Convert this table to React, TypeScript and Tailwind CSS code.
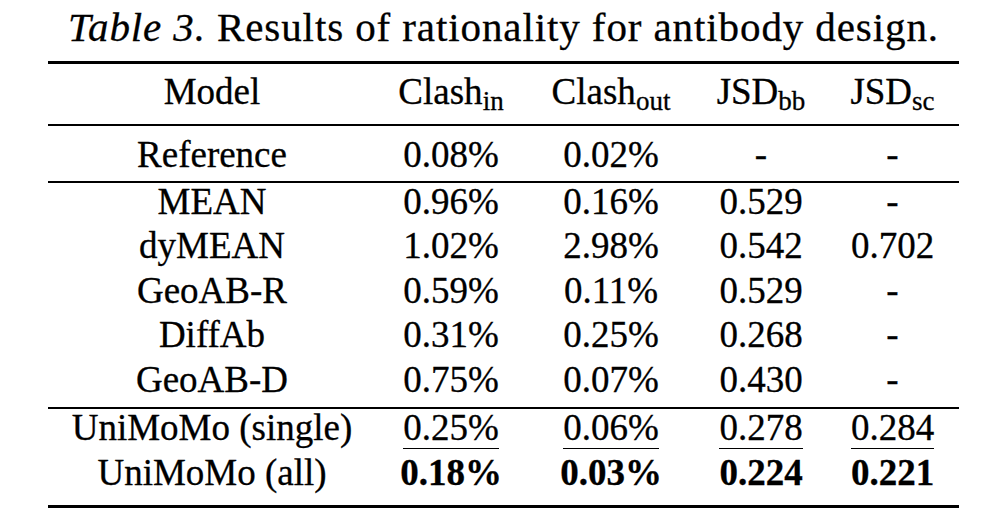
import React from "react";

type Cell = { v: string; u?: boolean; b?: boolean };

const cols = "grid grid-cols-[328px_150px_170px_130px_133px] text-center";

function Row({ name, cells, h = "" }: { name: string; cells: Cell[]; h?: string }) {
  return (
    <div className={`${cols} ${h} leading-[34px]`}>
      <div>{name}</div>
      {cells.map((c, i) => (
        <div key={i}>
          {c.u ? (
            <span className="inline-block border-b-[1.5px] border-black pb-[3px] leading-[34px]">{c.v}</span>
          ) : (
            <span className={c.b ? "font-bold" : ""}>{c.v}</span>
          )}
        </div>
      ))}
    </div>
  );
}

function Sub({ children }: { children: React.ReactNode }) {
  return <span className="text-[27px] leading-[0px] align-[-6px]">{children}</span>;
}

const mid: [string, string[]][] = [
  ["MEAN", ["0.96%", "0.16%", "0.529", "-"]],
  ["dyMEAN", ["1.02%", "2.98%", "0.542", "0.702"]],
  ["GeoAB-R", ["0.59%", "0.11%", "0.529", "-"]],
  ["DiffAb", ["0.31%", "0.25%", "0.268", "-"]],
  ["GeoAB-D", ["0.75%", "0.07%", "0.430", "-"]],
];

export default function App() {
  return (
    <div
      className="w-[986px] h-[520px] bg-white text-black text-[37px] [-webkit-text-stroke:0.3px_black]"
      style={{ fontFamily: '"Liberation Serif", "Times New Roman", serif' }}
    >
      <div className="ml-[48px] w-[911px] pt-[10px]">
        <div className="text-center text-[41px] tracking-[0.9px] leading-[34px] whitespace-nowrap">
          <span className="italic">Table 3.</span> Results of rationality for antibody design.
        </div>
        <div className="mt-[17px] h-[3px] bg-black" />
        <div className={`${cols} leading-[34px] pt-[11px] pb-[15px]`}>
          <div>Model</div>
          <div>
            Clash<Sub>in</Sub>
          </div>
          <div>
            Clash<Sub>out</Sub>
          </div>
          <div>
            JSD<Sub>bb</Sub>
          </div>
          <div>
            JSD<Sub>sc</Sub>
          </div>
        </div>
        <div className="h-[2px] bg-black" />
        <div className="pt-[12px] pb-[9px]">
          <Row name="Reference" cells={[{ v: "0.08%" }, { v: "0.02%" }, { v: "-" }, { v: "-" }]} />
        </div>
        <div className="h-[1.5px] bg-black" />
        <div className="pt-[2px]">
          {mid.map(([n, vs]) => (
            <Row key={n} name={n} h="h-[44.6px]" cells={vs.map((v) => ({ v }))} />
          ))}
        </div>
        <div className="h-[1.5px] bg-black" />
        <div className="pt-[2.5px]">
          <Row
            name="UniMoMo (single)"
            h="h-[45px]"
            cells={[
              { v: "0.25%", u: true },
              { v: "0.06%", u: true },
              { v: "0.278", u: true },
              { v: "0.284", u: true },
            ]}
          />
          <Row
            name="UniMoMo (all)"
            h="h-[45px]"
            cells={[
              { v: "0.18%", b: true },
              { v: "0.03%", b: true },
              { v: "0.224", b: true },
              { v: "0.221", b: true },
            ]}
          />
        </div>
        <div className="mt-[3.5px] h-[3px] bg-black" />
      </div>
    </div>
  );
}
